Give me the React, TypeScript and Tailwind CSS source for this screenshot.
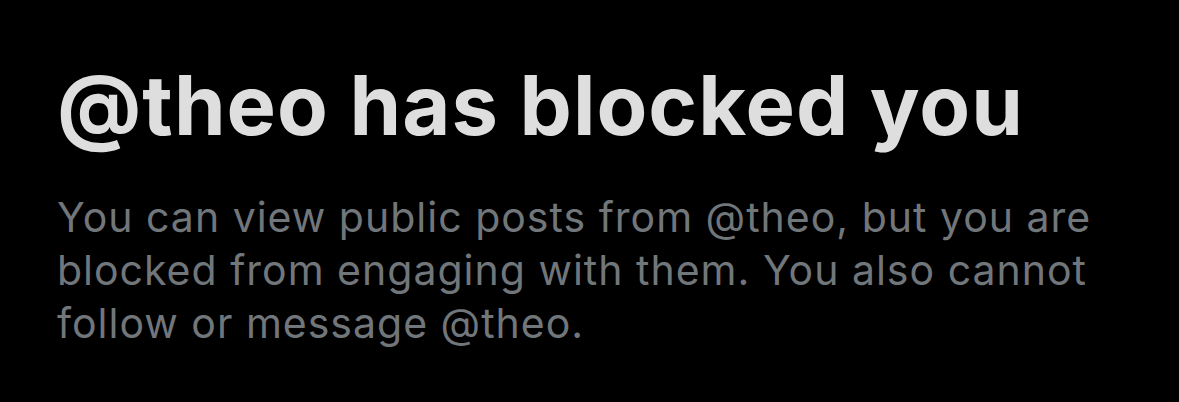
const App = () => {
  return (
    <div
      className="w-[1179px] h-[402px] bg-black pl-[57px] pt-[61px] overflow-hidden"
      style={{ fontFamily: 'Inter, "Noto Sans", sans-serif' }}
    >
      <h1 className="text-[83px] leading-[88px] font-bold text-[#dedede] tracking-[1px] whitespace-nowrap">
        @theo has blocked you
      </h1>
      <p className="mt-[42px] w-[1090px] text-[41px] leading-[53px] text-[#71767b] tracking-[1px]">
        You can view public posts from @theo, but you are blocked from engaging
        with them. You also cannot follow or message @theo.
      </p>
    </div>
  );
};

export default App;
